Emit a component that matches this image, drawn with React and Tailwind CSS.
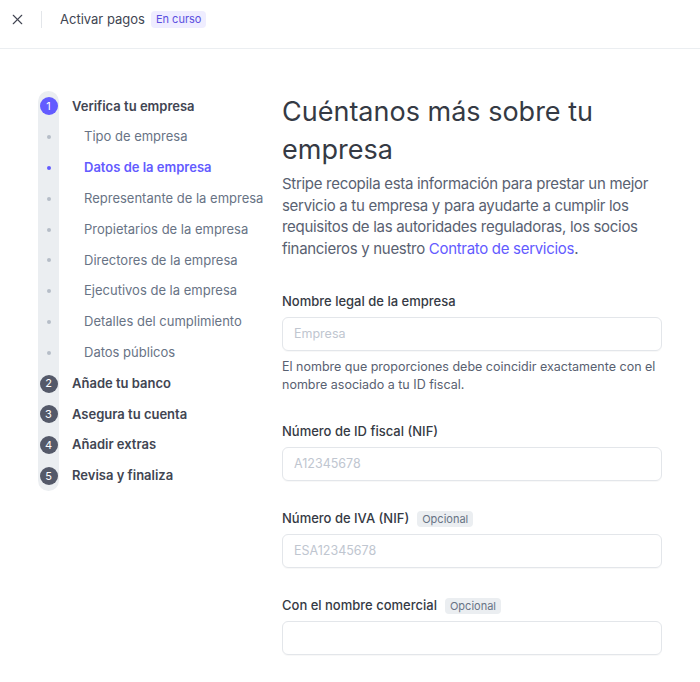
import React from "react";
import { X } from "lucide-react";

const steps = [
  { n: 1, label: "Verifica tu empresa", active: true },
  { sub: "Tipo de empresa" },
  { sub: "Datos de la empresa", active: true },
  { sub: "Representante de la empresa" },
  { sub: "Propietarios de la empresa" },
  { sub: "Directores de la empresa" },
  { sub: "Ejecutivos de la empresa" },
  { sub: "Detalles del cumplimiento" },
  { sub: "Datos públicos" },
  { n: 2, label: "Añade tu banco" },
  { n: 3, label: "Asegura tu cuenta" },
  { n: 4, label: "Añadir extras" },
  { n: 5, label: "Revisa y finaliza" },
];

const Field = ({ label, optional, placeholder, help }) => (
  <div className="flex flex-col">
    <div className="flex items-center gap-2 h-[18px] mb-[6px]">
      <span className="text-[13px] font-medium text-[#353a44]">{label}</span>
      {optional && (
        <span className="px-[5px] h-[16px] leading-[16px] rounded bg-[#ebeef1] text-[11px] text-[#687385]">
          Opcional
        </span>
      )}
    </div>
    <input
      placeholder={placeholder}
      className="h-[34px] w-full rounded-md border border-[#e3e6ea] px-[11px] text-[12.5px] text-[#353a44] placeholder:text-[#c0c6d0] shadow-[0_1px_1px_rgba(0,0,0,0.03)] outline-none"
    />
    {help && (
      <p className="mt-[7px] text-[12.5px] leading-[18px] text-[#596171]">{help}</p>
    )}
  </div>
);

const App = () => {
  return (
    <div
      className="w-[700px] h-[682px] bg-white overflow-hidden"
      style={{ fontFamily: "Inter, 'Noto Sans', sans-serif" }}
    >
      {/* Header */}
      <header className="h-[49px] flex items-center border-b border-[#ebeef1] pl-[9px] pb-[9px]">
        <X size={17} strokeWidth={1.6} className="text-[#414552]" />
        <div className="ml-[15px] w-px h-[17px] bg-[#e3e6ea]" />
        <span className="ml-[18px] text-[13px] text-[#414552]">Activar pagos</span>
        <span className="ml-[6px] px-[5px] h-[17px] leading-[17px] rounded bg-[#efedff] text-[11px] text-[#5b4fe0]">
          En curso
        </span>
      </header>

      <div className="flex pt-[42px]">
        {/* Stepper */}
        <nav className="w-[244px] ml-[38px] flex flex-col">
          {steps.map((s, i) => (
            <div key={i} className="flex items-center h-[30.8px]">
              <div
                className={`w-[21px] h-full bg-[#ebeef1] flex items-center justify-center ${
                  i === 0 ? "rounded-t-full" : ""
                } ${i === steps.length - 1 ? "rounded-b-full" : ""}`}
              >
                {s.n ? (
                  <span
                    className={`w-[18px] h-[18px] rounded-full flex items-center justify-center text-[11px] text-white ${
                      s.active ? "bg-[#635bff]" : "bg-[#545969]"
                    }`}
                  >
                    {s.n}
                  </span>
                ) : (
                  <span
                    className={`w-[4px] h-[4px] rounded-full ${
                      s.active ? "bg-[#635bff]" : "bg-[#b6bdc8]"
                    }`}
                  />
                )}
              </div>
              {s.n ? (
                <span className="ml-[13px] text-[13px] font-semibold text-[#414552]">
                  {s.label}
                </span>
              ) : (
                <span
                  className={`ml-[25px] text-[13px] whitespace-nowrap ${
                    s.active ? "text-[#635bff] font-semibold" : "text-[#687385]"
                  }`}
                >
                  {s.sub}
                </span>
              )}
            </div>
          ))}
        </nav>

        {/* Form */}
        <main className="w-[380px] flex flex-col pt-[2px]">
          <h1 className="text-[27px] leading-[38px] text-[#353a44] font-normal">
            Cuéntanos más sobre tu empresa
          </h1>
          <p className="mt-[4px] text-[15px] leading-[21.7px] tracking-[-0.3px] text-[#596171]">
            Stripe recopila esta información para prestar un mejor servicio a tu
            empresa y para ayudarte a cumplir los requisitos de las autoridades
            reguladoras, los socios financieros y nuestro{" "}
            <a className="text-[#635bff]">Contrato de servicios</a>.
          </p>

          <div className="mt-[33px] flex flex-col gap-[29px]">
            <Field
              label="Nombre legal de la empresa"
              placeholder="Empresa"
              help="El nombre que proporciones debe coincidir exactamente con el nombre asociado a tu ID fiscal."
            />
            <Field label="Número de ID fiscal (NIF)" placeholder="A12345678" />
            <Field label="Número de IVA (NIF)" optional placeholder="ESA12345678" />
            <Field label="Con el nombre comercial" optional placeholder="" />
          </div>
        </main>
      </div>
    </div>
  );
};

export default App;
